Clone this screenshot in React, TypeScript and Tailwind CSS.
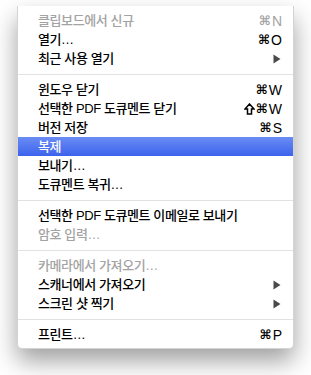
import React from 'react'

type Item =
  | { sep: true }
  | { sep?: false; label: string; key?: string; shift?: boolean; disabled?: boolean; sub?: boolean; active?: boolean }

const items: Item[] = [
  { label: '클립보드에서 신규', key: 'N', disabled: true },
  { label: '열기…', key: 'O' },
  { label: '최근 사용 열기', sub: true },
  { sep: true },
  { label: '윈도우 닫기', key: 'W' },
  { label: '선택한 PDF 도큐멘트 닫기', key: 'W', shift: true },
  { label: '버전 저장', key: 'S' },
  { label: '복제', active: true },
  { label: '보내기…' },
  { label: '도큐멘트 복귀…' },
  { sep: true },
  { label: '선택한 PDF 도큐멘트 이메일로 보내기' },
  { label: '암호 입력…', disabled: true },
  { sep: true },
  { label: '카메라에서 가져오기…', disabled: true },
  { label: '스캐너에서 가져오기', sub: true },
  { label: '스크린 샷 찍기', sub: true },
  { sep: true },
  { label: '프린트…', key: 'P' },
]

function Arrow() {
  return (
    <svg width="8" height="10" viewBox="0 0 8 10" className="mr-[1px]">
      <path d="M0.5 0.5 L7.5 5 L0.5 9.5 Z" fill="#4a4a4a" />
    </svg>
  )
}

function Shift() {
  return (
    <svg width="11" height="12" viewBox="0 0 11 12" className="mr-[1px]">
      <path d="M5.5 1 L10 6 L7.5 6 L7.5 11 L3.5 11 L3.5 6 L1 6 Z" fill="none" stroke="currentColor" strokeWidth="1.5" strokeLinejoin="miter" />
    </svg>
  )
}

export default function App() {
  return (
    <div className="w-[311px] h-[375px] bg-white pt-[6px] pl-[17px]">
      <div
        className="w-[277px] bg-white rounded-b-[5px] border border-t-0 border-[#d4d4d4] pt-[5px] pb-[4px] shadow-[0_12px_24px_rgba(0,0,0,0.38)]"
        style={{ fontFamily: '"Liberation Sans", "Noto Sans CJK KR", sans-serif' }}
      >
        {items.map((it, i) =>
          it.sep ? (
            <div key={i} className="h-[12px] flex items-center">
              <div className="h-px w-full bg-[#e2e2e2]" />
            </div>
          ) : (
            <div
              key={i}
              className={
                'h-[19px] flex items-center justify-between pl-[20px] pr-[11px] text-[13px] leading-none font-medium ' +
                (it.active
                  ? 'bg-gradient-to-b from-[#6a8cf4] to-[#3d62ec] text-white font-bold'
                  : it.disabled
                  ? 'text-[#a3a3a3]'
                  : 'text-black')
              }
            >
              <span className="tracking-[-0.4px]">{it.label}</span>
              {it.key && (
                <span className="flex items-center">
                  {it.shift && <Shift />}
                  <span className="font-['DejaVu_Sans',sans-serif] text-[13px] font-bold">⌘</span>
                  <span className="text-[14px] ml-[1px]">{it.key}</span>
                </span>
              )}
              {it.sub && <Arrow />}
            </div>
          )
        )}
      </div>
    </div>
  )
}
